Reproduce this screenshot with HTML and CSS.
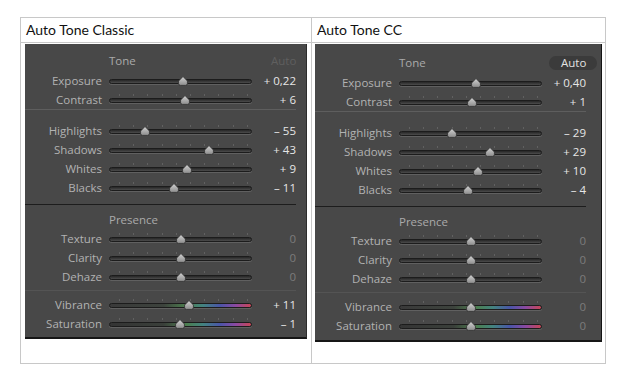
FILE: index.html
```html
<!DOCTYPE html>
<html lang="en">
<head>
    <meta charset="UTF-8">
    <meta name="viewport" content="width=device-width, initial-scale=1.0">
    <title>Auto Tone Comparison</title>
    <link rel="stylesheet" href="styles.css">
</head>
<body>
    <svg class="defs" width="0" height="0" aria-hidden="true">
        <defs>
            <linearGradient id="knobFill" x1="0" y1="0" x2="0" y2="1">
                <stop offset="0" stop-color="#d2d2d2"/>
                <stop offset="1" stop-color="#8c8c8c"/>
            </linearGradient>
        </defs>
    </svg>

    <div class="sheet">
        <div class="cell head">Auto Tone Classic</div>
        <div class="cell head">Auto Tone CC</div>
        <div class="cell body body-classic">
            <div class="panel panel-classic" id="classic"></div>
        </div>
        <div class="cell body body-cc">
            <div class="panel panel-cc" id="cc"></div>
        </div>
    </div>

    <script>
        document.addEventListener('DOMContentLoaded', () => {
            const panels = {
                classic: {
                    autoOn: false,
                    basic: [
                        { label: 'Exposure', pos: 51.7, value: '+ 0,22', noTicks: true },
                        { label: 'Contrast', pos: 53, value: '+ 6' }
                    ],
                    tone: [
                        { label: 'Highlights', pos: 25, value: '– 55' },
                        { label: 'Shadows', pos: 70, value: '+ 43' },
                        { label: 'Whites', pos: 54.5, value: '+ 9' },
                        { label: 'Blacks', pos: 45.5, value: '– 11' }
                    ],
                    presence: [
                        { label: 'Texture', pos: 50, value: '0' },
                        { label: 'Clarity', pos: 50, value: '0' },
                        { label: 'Dehaze', pos: 50, value: '0' }
                    ],
                    color: [
                        { label: 'Vibrance', pos: 56, value: '+ 11', track: 'vib' },
                        { label: 'Saturation', pos: 49.6, value: '– 1', track: 'sat' }
                    ]
                },
                cc: {
                    autoOn: true,
                    basic: [
                        { label: 'Exposure', pos: 54, value: '+ 0,40', noTicks: true },
                        { label: 'Contrast', pos: 51, value: '+ 1' }
                    ],
                    tone: [
                        { label: 'Highlights', pos: 37, value: '– 29' },
                        { label: 'Shadows', pos: 63.6, value: '+ 29' },
                        { label: 'Whites', pos: 55, value: '+ 10' },
                        { label: 'Blacks', pos: 48, value: '– 4' }
                    ],
                    presence: [
                        { label: 'Texture', pos: 50.3, value: '0' },
                        { label: 'Clarity', pos: 50.3, value: '0' },
                        { label: 'Dehaze', pos: 50.3, value: '0' }
                    ],
                    color: [
                        { label: 'Vibrance', pos: 50.3, value: '0', track: 'vib' },
                        { label: 'Saturation', pos: 50.3, value: '0', track: 'sat' }
                    ]
                }
            };

            const knob = `<svg class="knob-shape" width="10" height="10" viewBox="0 0 10 10">
                <path d="M5 0.5 L9.4 5 L9.4 7.6 Q9.4 9.4 7.6 9.4 L2.4 9.4 Q0.6 9.4 0.6 7.6 L0.6 5 Z"
                      fill="url(#knobFill)" stroke="#2e2e2e" stroke-width="0.8"/>
            </svg>`;

            function sliderRow(item) {
                const zero = item.value === '0' ? ' value-zero' : '';
                const ticks = item.noTicks ? '' : '<div class="ticks"></div>';
                const trackClass = item.track ? 'track track-' + item.track : 'track';
                return `
                    <div class="row">
                        <span class="label">${item.label}</span>
                        <div class="slider">
                            ${ticks}
                            <div class="${trackClass}"></div>
                            <div class="knob" style="left: ${item.pos}%">${knob}</div>
                        </div>
                        <span class="value${zero}">${item.value}</span>
                    </div>`;
            }

            function renderPanel(el, data) {
                const autoClass = data.autoOn ? 'auto auto-on' : 'auto';
                el.innerHTML = `
                    <section class="group group-basic">
                        <div class="row group-title">
                            <span class="title">Tone</span>
                            <span class="${autoClass}">Auto</span>
                        </div>
                        ${data.basic.map(sliderRow).join('')}
                    </section>
                    <section class="group group-tone">
                        ${data.tone.map(sliderRow).join('')}
                    </section>
                    <section class="group group-presence">
                        <div class="row group-title">
                            <span class="title">Presence</span>
                        </div>
                        ${data.presence.map(sliderRow).join('')}
                    </section>
                    <section class="group group-color">
                        ${data.color.map(sliderRow).join('')}
                    </section>`;
            }

            renderPanel(document.getElementById('classic'), panels.classic);
            renderPanel(document.getElementById('cc'), panels.cc);
        });
    </script>
</body>
</html>
```

FILE: styles.css
```css
body {
    margin: 0;
    padding: 17px 0 0 20px;
    background: #fff;
    font-family: "Lato", "Liberation Sans", sans-serif;
}
.defs {
    position: absolute;
}
.sheet {
    display: grid;
    grid-template-columns: 291px 294px;
    grid-template-rows: 25px 321px;
    width: 586px;
    border-left: 1px solid #c8c8c8;
    border-top: 1px solid #c8c8c8;
    box-sizing: border-box;
}
.cell {
    box-sizing: border-box;
    border-right: 1px solid #c8c8c8;
    border-bottom: 1px solid #c8c8c8;
}
.head {
    padding: 3px 0 0 5px;
    font-size: 14px;
    color: #111;
}
.body-classic {
    padding: 1px 0 0 4px;
}
.body-cc {
    padding: 1px 0 0 3px;
}

/* lightroom panel */
.panel {
    background: #484848;
    font-family: "Open Sans", "DejaVu Sans", sans-serif;
    font-size: 11.5px;
    color: #b2b2b2;
    border-bottom: 2px solid #161616;
}
.panel-classic {
    width: 282px;
    padding-right: 10px;
    box-sizing: border-box;
    border-right: 1px solid #2c2c2c;
}
.panel-cc {
    width: 287px;
    padding-right: 15px;
    box-sizing: border-box;
    border-right: 1px solid #141414;
}
.group-basic {
    padding: 6px 0 0;
    border-bottom: 1px solid #5e5e5e;
}
.panel-cc .group-basic {
    padding-top: 8px;
}
.group-basic .group-title {
    height: 21px;
}
.group-tone {
    padding: 11px 0 7px;
    border-bottom: 1px solid #1d1d1d;
}
.group-presence {
    padding: 5px 0 4px;
    border-bottom: 1px solid #545454;
}
.group-color {
    padding: 4px 0 4px;
}
.panel-cc .group-color {
    padding-bottom: 5px;
}
.row {
    display: grid;
    grid-template-columns: 77px 143px 1fr;
    column-gap: 7px;
    height: 19px;
    align-items: center;
    line-height: 19px;
}
.label {
    text-align: right;
    white-space: nowrap;
}
.title {
    grid-column: 2;
    color: #aaaaaa;
}
.auto {
    grid-column: 3;
    justify-self: end;
    margin-right: -4px;
    padding: 0 11px 0 12px;
    height: 14px;
    line-height: 14px;
    border-radius: 7px;
    color: #5f5f5f;
}
.auto-on {
    background: #3b3b3b;
    color: #e2e2e2;
}
.value {
    text-align: right;
    color: #e6e6e6;
    white-space: nowrap;
}
.value-zero {
    color: #7c7c7c;
}

/* slider */
.slider {
    position: relative;
    height: 19px;
}
.ticks {
    position: absolute;
    top: 4px;
    left: 10px;
    width: 130px;
    height: 2px;
    background: repeating-linear-gradient(to right, #616161 0 1px, transparent 1px 14.2px);
}
.track {
    position: absolute;
    top: 8px;
    left: 0;
    right: 0;
    height: 5px;
    box-sizing: border-box;
    border: 1px solid #1c1c1c;
    border-radius: 3px;
    background: linear-gradient(#262626, #4c4c4c);
    box-shadow: 0 1px 0 #606060;
}
.track-vib {
    background: linear-gradient(to right, #3a3a3a 0%, #3d433d 38%, #4c7e4e 54%, #438380 66%, #4a55a8 78%, #8a4aa2 89%, #c84656 100%);
}
.track-sat {
    background: linear-gradient(to right, #343434 0%, #3a3f3a 38%, #4c7e4e 54%, #438380 66%, #4a55a8 78%, #8a4aa2 89%, #c84656 100%);
}
.knob {
    position: absolute;
    top: 5px;
    width: 10px;
    height: 10px;
    margin-left: -5px;
}
.knob-shape {
    display: block;
}
```
